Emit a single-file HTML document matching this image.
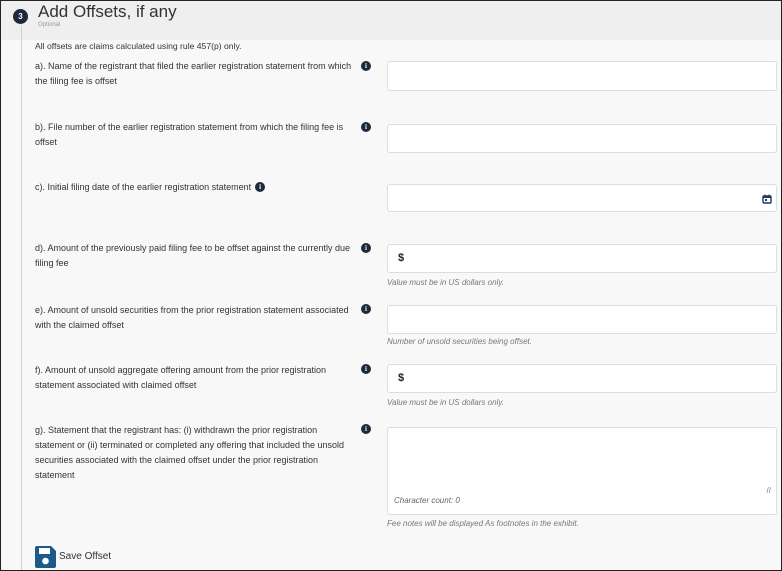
<!DOCTYPE html>
<html><head><meta charset="utf-8"><style>
*{box-sizing:border-box;margin:0;padding:0}
html,body{width:782px;height:571px;overflow:hidden}
body{font-family:"Liberation Sans",Arial,sans-serif;background:#f8f8f8;position:relative;color:#333}
.frame{position:absolute;left:0;top:0;width:782px;height:571px;border:1px solid #222;pointer-events:none;z-index:10}
.hdr{position:absolute;left:0;top:0;width:782px;height:40px;background:#efefef}
.circ{position:absolute;left:13px;top:9px;width:15px;height:15px;border-radius:50%;background:#1d2a3b;color:#fff;font-size:8px;font-weight:bold;text-align:center;line-height:15px}
.title{position:absolute;left:38px;top:2px;font-size:17px;color:#333}
.opt{position:absolute;left:38px;top:22px;font-size:6px;color:#999}
.vline{position:absolute;left:21px;top:25px;width:1px;height:546px;background:#d0d0d0}
.t{position:absolute;font-size:8.6px;line-height:15px;color:#333}
.lbl{position:absolute;left:35px;width:322px;font-size:9px;line-height:15px;color:#333}
.info{position:absolute;left:361px;width:10px;height:10px;border-radius:50%;background:#1d2a3b;color:#fff;font:bold 7px/10px "Liberation Serif",serif;text-align:center}
.ii{display:inline-block;vertical-align:1px;margin-left:4px;width:10px;height:10px;border-radius:50%;background:#1d2a3b;color:#fff;font:bold 7px/10px "Liberation Serif",serif;text-align:center}
.inp{position:absolute;left:387px;width:390px;background:#fff;border:1px solid #ddd;border-radius:3px}
.help{position:absolute;left:387px;font-size:8px;font-style:italic;color:#777}
.dol{position:absolute;left:10px;font-size:11px;color:#222;font-weight:bold}
</style></head><body>
<div class="hdr"></div>
<div class="circ">3</div>
<div class="title">Add Offsets, if any</div>
<div class="opt">Optional</div>
<div class="vline"></div>
<div class="t" style="left:35px;top:39px">All offsets are claims calculated using rule 457(p) only.</div>

<div class="lbl" style="top:59px">a). Name of the registrant that filed the earlier registration statement from which the filing fee is offset</div>
<div class="info" style="top:61px">i</div>
<div class="inp" style="top:61px;height:30px"></div>

<div class="lbl" style="top:120px">b). File number of the earlier registration statement from which the filing fee is offset</div>
<div class="info" style="top:122px">i</div>
<div class="inp" style="top:124px;height:29px"></div>

<div class="lbl" style="top:180px">c). Initial filing date of the earlier registration statement<span class="ii">i</span></div>
<div class="inp" style="top:184px;height:28px">
<svg style="position:absolute;right:4px;top:9px" width="10" height="10" viewBox="0 0 10 10"><rect x="1" y="2" width="8" height="7" rx="1" fill="none" stroke="#1d3a5c" stroke-width="1.4"/><rect x="1" y="2" width="8" height="2" fill="#1d3a5c"/><rect x="2.5" y="0.5" width="1" height="2" fill="#1d3a5c"/><rect x="6.5" y="0.5" width="1" height="2" fill="#1d3a5c"/><rect x="3" y="5" width="2" height="2" fill="#1d3a5c"/></svg>
</div>

<div class="lbl" style="top:241px">d). Amount of the previously paid filing fee to be offset against the currently due filing fee</div>
<div class="info" style="top:243px">i</div>
<div class="inp" style="top:244px;height:29px"><span class="dol" style="top:7px">$</span></div>
<div class="help" style="top:278px">Value must be in US dollars only.</div>

<div class="lbl" style="top:303px">e). Amount of unsold securities from the prior registration statement associated with the claimed offset</div>
<div class="info" style="top:304px">i</div>
<div class="inp" style="top:305px;height:29px"></div>
<div class="help" style="top:337px">Number of unsold securities being offset.</div>

<div class="lbl" style="top:363px">f). Amount of unsold aggregate offering amount from the prior registration statement associated with claimed offset</div>
<div class="info" style="top:364px">i</div>
<div class="inp" style="top:364px;height:29px"><span class="dol" style="top:7px">$</span></div>
<div class="help" style="top:398px">Value must be in US dollars only.</div>

<div class="lbl" style="top:423px">g). Statement that the registrant has: (i) withdrawn the prior registration statement or (ii) terminated or completed any offering that included the unsold securities associated with the claimed offset under the prior registration statement</div>
<div class="info" style="top:424px">i</div>
<div class="inp" style="top:427px;height:88px">
<span style="position:absolute;left:6px;top:68px;font-size:8px;font-style:italic;color:#666">Character count: 0</span>
<span style="position:absolute;right:5px;top:58px;font-size:8px;color:#777">//</span>
</div>
<div class="help" style="top:519px">Fee notes will be displayed As footnotes in the exhibit.</div>

<svg style="position:absolute;left:35px;top:546px" width="21" height="22" viewBox="0 0 21 22"><path d="M2 0h14l5 5v15a2 2 0 0 1-2 2H2a2 2 0 0 1-2-2V2a2 2 0 0 1 2-2z" fill="#1d5a8a"/><rect x="4" y="2" width="11" height="6" fill="#fff"/><circle cx="10.5" cy="15" r="3.3" fill="#fff"/></svg>
<div class="t" style="left:59px;top:549px;font-size:10px">Save Offset</div>
<div class="frame"></div>
</body></html>
